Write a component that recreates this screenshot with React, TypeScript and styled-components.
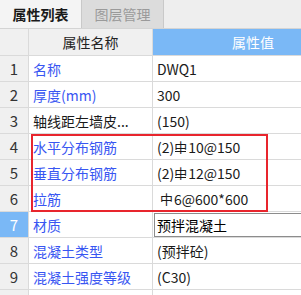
import * as React from "react"
import styled, { createGlobalStyle, css } from "styled-components"

const GlobalStyle = createGlobalStyle`
  html, body {
    margin: 0;
    padding: 0;
    background: #ffffff;
  }
  body {
    font-family: "Noto Sans CJK SC", "Noto Sans", sans-serif;
    font-size: 14px;
  }
`

const Panel = styled.div`
  position: relative;
  width: 301px;
  height: 295px;
  overflow: hidden;
  background: #ffffff;
`

const TabBar = styled.div`
  display: flex;
  height: 28px;
  background: #eeeeee;
  border-bottom: 1px solid #d4d4d4;
`

const Tab = styled.div<{ active?: boolean }>`
  display: flex;
  align-items: center;
  justify-content: center;
  width: 81px;
  height: 100%;
  border-right: 1px solid #c9c9c9;
  color: #9a9a9a;
  background: #dcdcdc;
  ${({ active }) =>
    active &&
    css`
      color: #1a1a1a;
      background: #f4f4f4;
      font-weight: 700;
    `};
`

const Row = styled.div<{ header?: boolean }>`
  display: flex;
  height: 25px;
  border-bottom: 1px solid #dadada;
  ${({ header }) =>
    header &&
    css`
      height: 26px;
      background: #f0f0f0;
    `};
`

const IndexCell = styled.div<{ selected?: boolean }>`
  display: flex;
  align-items: center;
  justify-content: center;
  width: 28px;
  flex: none;
  font-size: 15px;
  border-right: 1px solid #dadada;
  background: ${({ selected }) => (selected ? "#7ab8f6" : "#f0f0f0")};
  color: ${({ selected }) => (selected ? "#ffffff" : "#333333")};
`

const NameCell = styled.div<{ plain?: boolean; header?: boolean }>`
  display: flex;
  align-items: center;
  width: 124px;
  flex: none;
  padding-left: 4px;
  box-sizing: border-box;
  border-right: 1px solid #dadada;
  white-space: nowrap;
  overflow: hidden;
  color: ${({ plain }) => (plain ? "#1a1a1a" : "#3856f2")};
  ${({ header }) =>
    header &&
    css`
      justify-content: center;
      padding-left: 0;
      color: #222222;
    `};
`

const ValueCell = styled.div<{ header?: boolean }>`
  display: flex;
  align-items: center;
  flex: 1;
  padding-left: 4px;
  color: #1a1a1a;
  white-space: nowrap;
  ${({ header }) =>
    header &&
    css`
      background: #7ab8f6;
      color: #ffffff;
      padding-left: 79px;
    `};
`

const EditBox = styled.div`
  display: flex;
  align-items: center;
  flex: 1;
  align-self: stretch;
  margin: 1px 0 0 1px;
  padding-left: 2px;
  border: 1px solid #8c8c8c;
  border-right: none;
  background: #ffffff;
`

const Grade = styled.span<{ bar?: boolean }>`
  position: relative;
  display: inline-block;
  font-size: 13px;
  margin: 0 1px 0 ${({ bar }) => (bar ? "0" : "3px")};
  ${({ bar }) =>
    bar &&
    css`
      &::after {
        content: "";
        position: absolute;
        left: 1px;
        right: 1px;
        bottom: 4px;
        height: 1px;
        background: #1a1a1a;
      }
    `};
`

const Highlight = styled.div`
  position: absolute;
  left: 31px;
  top: 134px;
  width: 237px;
  height: 78px;
  box-sizing: border-box;
  border: 2px solid #e8252d;
  pointer-events: none;
`

interface Item {
  name: string
  value: React.ReactNode
  plain?: boolean
}

const items: Item[] = [
  { name: "名称", value: "DWQ1" },
  { name: "厚度(mm)", value: "300" },
  { name: "轴线距左墙皮...", value: "(150)", plain: true },
  {
    name: "水平分布钢筋",
    value: (
      <>
        (2)<Grade bar>中</Grade>10@150
      </>
    ),
  },
  {
    name: "垂直分布钢筋",
    value: (
      <>
        (2)<Grade bar>中</Grade>12@150
      </>
    ),
  },
  {
    name: "拉筋",
    value: (
      <>
        <Grade>中</Grade>6@600*600
      </>
    ),
  },
  { name: "材质", value: "预拌混凝土" },
  { name: "混凝土类型", value: "(预拌砼)" },
  { name: "混凝土强度等级", value: "(C30)" },
  { name: "", value: "" },
]

const App = () => (
  <>
    <GlobalStyle />
    <Panel>
      <TabBar>
        <Tab active>属性列表</Tab>
        <Tab>图层管理</Tab>
      </TabBar>
      <Row header>
        <IndexCell />
        <NameCell header>属性名称</NameCell>
        <ValueCell header>属性值</ValueCell>
      </Row>
      {items.map((item, i) => (
        <Row key={i}>
          <IndexCell selected={i === 6}>{i < 9 ? i + 1 : ""}</IndexCell>
          <NameCell plain={item.plain}>{item.name}</NameCell>
          {i === 6 ? (
            <EditBox>{item.value}</EditBox>
          ) : (
            <ValueCell>{item.value}</ValueCell>
          )}
        </Row>
      ))}
      <Highlight />
    </Panel>
  </>
)

export default App
